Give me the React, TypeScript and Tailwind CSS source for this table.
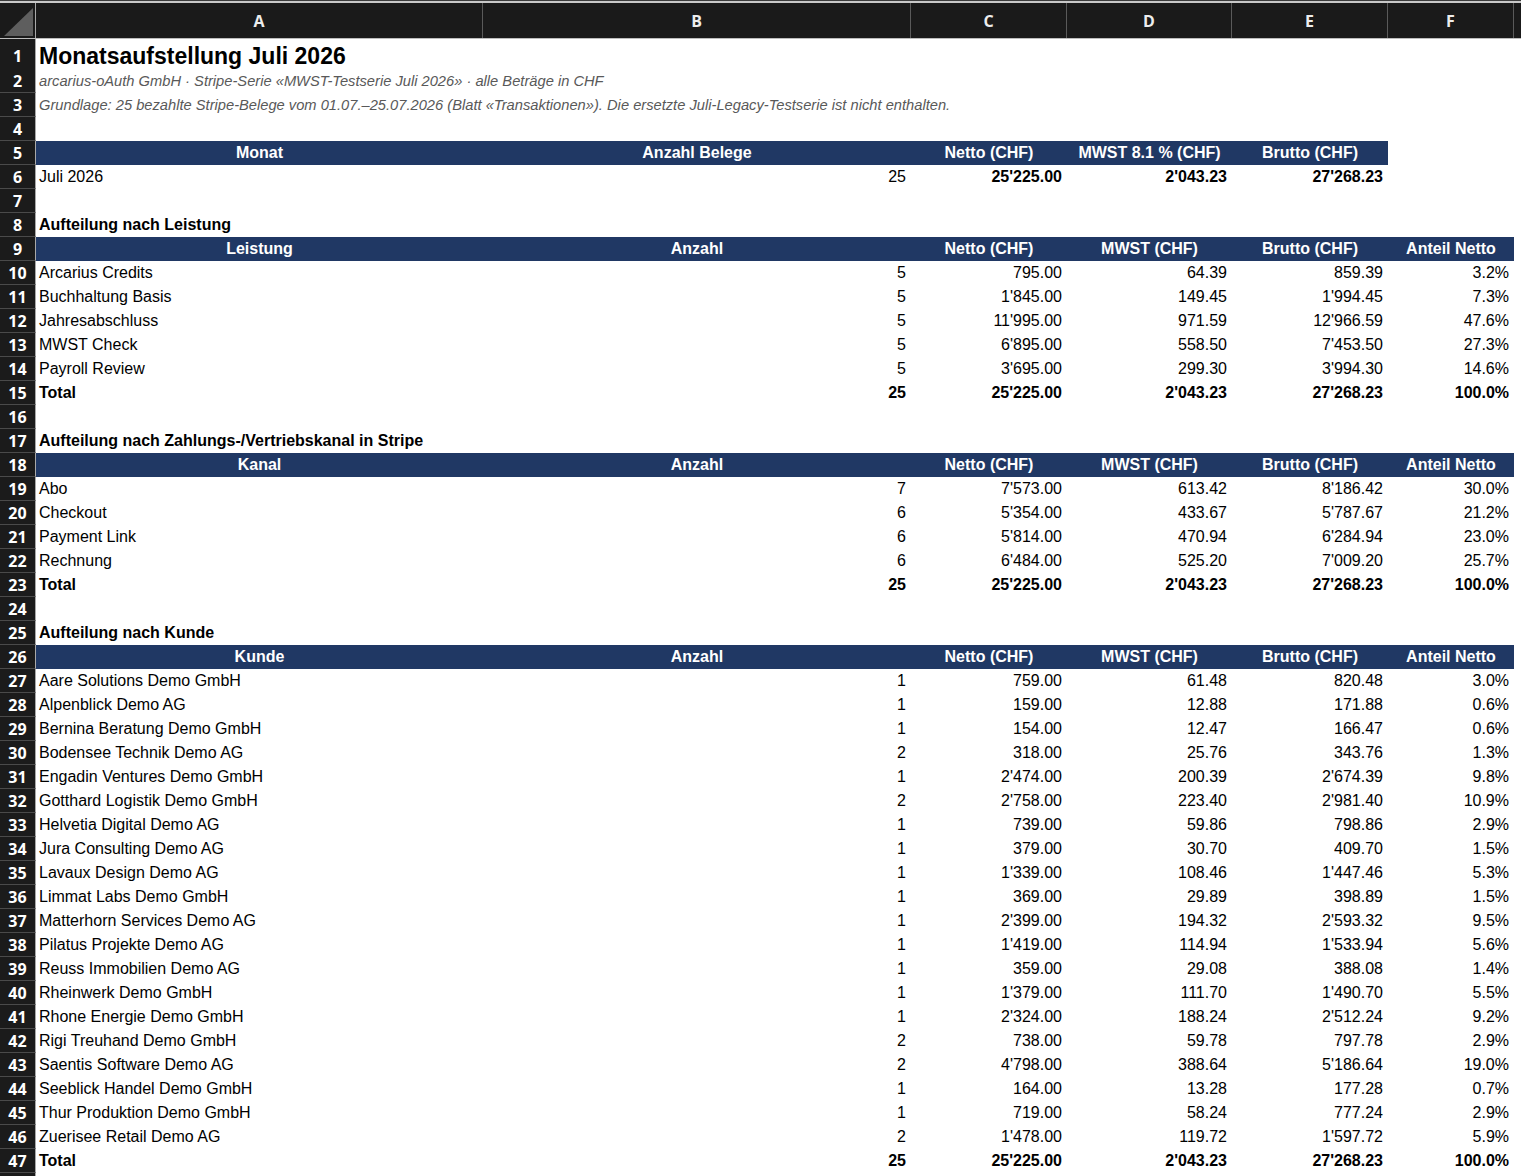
import React from "react";

const GRID = "grid grid-cols-[36px_447px_428px_156px_165px_156px_126px_1fr]";

function RowHead({ n }: { n?: number }) {
  return (
    <div className="flex items-center justify-center bg-[#1b1b1b] border-r border-r-[#a8a8a8] border-b border-b-[#4a4a4a] text-white font-bold text-[16px] font-['Open_Sans',sans-serif] leading-none">
      {n}
    </div>
  );
}

function Row({ n, tall, children }: { n?: number; tall?: boolean; children?: React.ReactNode }) {
  return (
    <div className={`${GRID} ${tall ? "h-[30px]" : "h-[24px]"}`}>
      <RowHead n={n} />
      {children}
    </div>
  );
}

function Span({ children, cls }: { children?: React.ReactNode; cls?: string }) {
  return (
    <div className={`col-span-7 flex items-center pl-[3px] whitespace-nowrap ${cls ?? ""}`}>{children}</div>
  );
}

function Num({ v, bold }: { v?: string; bold?: boolean }) {
  return (
    <div className={`flex items-center justify-end pr-[5px] whitespace-nowrap ${bold ? "font-bold" : ""}`}>{v}</div>
  );
}

function Txt({ v, bold }: { v: string; bold?: boolean }) {
  return (
    <div className={`flex items-center pl-[3px] whitespace-nowrap ${bold ? "font-bold" : ""}`}>{v}</div>
  );
}

function Head({ labels, full }: { labels: string[]; full?: boolean }) {
  return (
    <>
      {labels.map((l, i) => (
        <div
          key={i}
          className="flex items-center justify-center bg-[#203864] text-white font-bold whitespace-nowrap"
        >
          {l}
        </div>
      ))}
      {!full && <div />}
      <div />
    </>
  );
}

type D = [string, string, string, string, string, string];

function DataRow({ n, d, bold }: { n: number; d: D; bold?: boolean }) {
  return (
    <Row n={n}>
      <Txt v={d[0]} bold={bold} />
      <Num v={d[1]} bold={bold} />
      <Num v={d[2]} bold={bold} />
      <Num v={d[3]} bold={bold} />
      <Num v={d[4]} bold={bold} />
      <Num v={d[5]} bold={bold} />
      <div />
    </Row>
  );
}

const leistung: D[] = [
  ["Arcarius Credits", "5", "795.00", "64.39", "859.39", "3.2%"],
  ["Buchhaltung Basis", "5", "1'845.00", "149.45", "1'994.45", "7.3%"],
  ["Jahresabschluss", "5", "11'995.00", "971.59", "12'966.59", "47.6%"],
  ["MWST Check", "5", "6'895.00", "558.50", "7'453.50", "27.3%"],
  ["Payroll Review", "5", "3'695.00", "299.30", "3'994.30", "14.6%"],
];

const kanal: D[] = [
  ["Abo", "7", "7'573.00", "613.42", "8'186.42", "30.0%"],
  ["Checkout", "6", "5'354.00", "433.67", "5'787.67", "21.2%"],
  ["Payment Link", "6", "5'814.00", "470.94", "6'284.94", "23.0%"],
  ["Rechnung", "6", "6'484.00", "525.20", "7'009.20", "25.7%"],
];

const kunden: D[] = [
  ["Aare Solutions Demo GmbH", "1", "759.00", "61.48", "820.48", "3.0%"],
  ["Alpenblick Demo AG", "1", "159.00", "12.88", "171.88", "0.6%"],
  ["Bernina Beratung Demo GmbH", "1", "154.00", "12.47", "166.47", "0.6%"],
  ["Bodensee Technik Demo AG", "2", "318.00", "25.76", "343.76", "1.3%"],
  ["Engadin Ventures Demo GmbH", "1", "2'474.00", "200.39", "2'674.39", "9.8%"],
  ["Gotthard Logistik Demo GmbH", "2", "2'758.00", "223.40", "2'981.40", "10.9%"],
  ["Helvetia Digital Demo AG", "1", "739.00", "59.86", "798.86", "2.9%"],
  ["Jura Consulting Demo AG", "1", "379.00", "30.70", "409.70", "1.5%"],
  ["Lavaux Design Demo AG", "1", "1'339.00", "108.46", "1'447.46", "5.3%"],
  ["Limmat Labs Demo GmbH", "1", "369.00", "29.89", "398.89", "1.5%"],
  ["Matterhorn Services Demo AG", "1", "2'399.00", "194.32", "2'593.32", "9.5%"],
  ["Pilatus Projekte Demo AG", "1", "1'419.00", "114.94", "1'533.94", "5.6%"],
  ["Reuss Immobilien Demo AG", "1", "359.00", "29.08", "388.08", "1.4%"],
  ["Rheinwerk Demo GmbH", "1", "1'379.00", "111.70", "1'490.70", "5.5%"],
  ["Rhone Energie Demo GmbH", "1", "2'324.00", "188.24", "2'512.24", "9.2%"],
  ["Rigi Treuhand Demo GmbH", "2", "738.00", "59.78", "797.78", "2.9%"],
  ["Saentis Software Demo AG", "2", "4'798.00", "388.64", "5'186.64", "19.0%"],
  ["Seeblick Handel Demo GmbH", "1", "164.00", "13.28", "177.28", "0.7%"],
  ["Thur Produktion Demo GmbH", "1", "719.00", "58.24", "777.24", "2.9%"],
  ["Zuerisee Retail Demo AG", "2", "1'478.00", "119.72", "1'597.72", "5.9%"],
];

const total: D = ["Total", "25", "25'225.00", "2'043.23", "27'268.23", "100.0%"];

export default function App() {
  const cols = ["A", "B", "C", "D", "E", "F"];
  return (
    <div className="w-[1521px] h-[1176px] overflow-hidden bg-white text-black text-[16px] font-['Liberation_Sans',Arial,sans-serif]">
      <div className="h-[1px] bg-[#3c3c3c]" />
      <div className="h-[2px] bg-[#c9c9c9]" />
      <div className={`${GRID} h-[36px] bg-[#1a1a1a] border-b border-b-[#bdbdbd]`}>
        <div className="relative border-r border-r-[#a8a8a8]">
          <svg className="absolute left-[4px] top-[5px]" width="29" height="28" viewBox="0 0 29 28">
            <polygon points="0,28 29,28 29,0" fill="#5e5e5e" />
          </svg>
        </div>
        {cols.map((c) => (
          <div
            key={c}
            className="flex items-center justify-center border-r border-r-[#5a5a5a] text-[#ededed] text-[16px] font-bold font-['Open_Sans',sans-serif]"
          >
            {c}
          </div>
        ))}
        <div />
      </div>

      <Row n={1} tall>
        <Span cls="text-[23px] font-bold">Monatsaufstellung Juli 2026</Span>
      </Row>
      <Row n={2}>
        <Span cls="italic text-[14.7px] text-[#595959]">
          arcarius-oAuth GmbH · Stripe-Serie «MWST-Testserie Juli 2026» · alle Beträge in CHF
        </Span>
      </Row>
      <Row n={3}>
        <Span cls="italic text-[14.7px] text-[#595959]">
          Grundlage: 25 bezahlte Stripe-Belege vom 01.07.–25.07.2026 (Blatt «Transaktionen»). Die ersetzte Juli-Legacy-Testserie ist nicht enthalten.
        </Span>
      </Row>
      <Row n={4} />
      <Row n={5}>
        <Head labels={["Monat", "Anzahl Belege", "Netto (CHF)", "MWST 8.1 % (CHF)", "Brutto (CHF)"]} />
      </Row>
      <Row n={6}>
        <Txt v="Juli 2026" />
        <Num v="25" />
        <Num v="25'225.00" bold />
        <Num v="2'043.23" bold />
        <Num v="27'268.23" bold />
        <div />
        <div />
      </Row>
      <Row n={7} />
      <Row n={8}>
        <Span cls="font-bold">Aufteilung nach Leistung</Span>
      </Row>
      <Row n={9}>
        <Head full labels={["Leistung", "Anzahl", "Netto (CHF)", "MWST (CHF)", "Brutto (CHF)", "Anteil Netto"]} />
      </Row>
      {leistung.map((d, i) => (
        <DataRow key={d[0]} n={10 + i} d={d} />
      ))}
      <DataRow n={15} d={total} bold />
      <Row n={16} />
      <Row n={17}>
        <Span cls="font-bold">Aufteilung nach Zahlungs-/Vertriebskanal in Stripe</Span>
      </Row>
      <Row n={18}>
        <Head full labels={["Kanal", "Anzahl", "Netto (CHF)", "MWST (CHF)", "Brutto (CHF)", "Anteil Netto"]} />
      </Row>
      {kanal.map((d, i) => (
        <DataRow key={d[0]} n={19 + i} d={d} />
      ))}
      <DataRow n={23} d={total} bold />
      <Row n={24} />
      <Row n={25}>
        <Span cls="font-bold">Aufteilung nach Kunde</Span>
      </Row>
      <Row n={26}>
        <Head full labels={["Kunde", "Anzahl", "Netto (CHF)", "MWST (CHF)", "Brutto (CHF)", "Anteil Netto"]} />
      </Row>
      {kunden.map((d, i) => (
        <DataRow key={d[0]} n={27 + i} d={d} />
      ))}
      <DataRow n={47} d={total} bold />
      <Row />
    </div>
  );
}
